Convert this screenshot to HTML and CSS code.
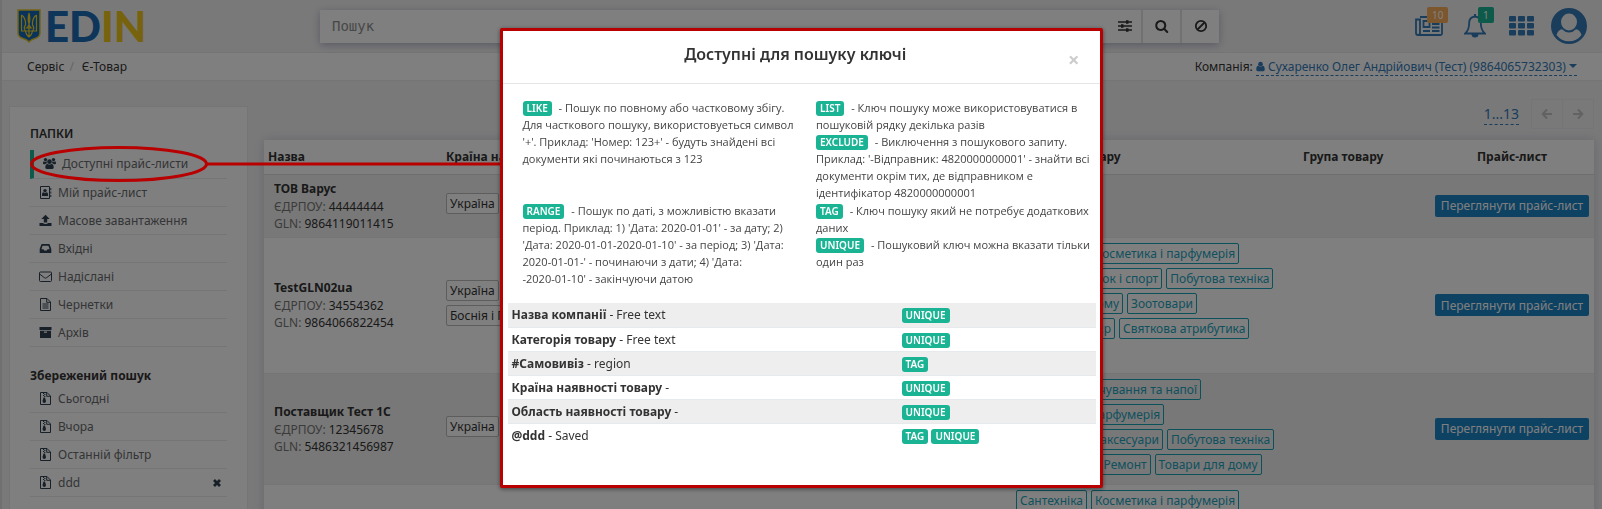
FILE: index.html
```html
<!DOCTYPE html>
<html lang="uk">
<head>
<meta charset="utf-8">
<title>EDIN Є-Товар</title>
<link rel="stylesheet" href="styles.css">
</head>
<body>
<svg class="sprite" aria-hidden="true">
  <symbol id="i-group" viewBox="0 0 14 13"><circle cx="7" cy="4.500" r="2.500"/><circle cx="2.700" cy="2.300" r="1.800"/><circle cx="11.300" cy="2.300" r="1.800"/><path d="M4.600 6.800Q7 8.600 9.400 6.800 11.600 7.600 11.600 10.600 11.600 12.500 10 12.500H4Q2.400 12.500 2.400 10.600 2.400 7.600 4.600 6.800ZM0 6.500Q0 4 1 4 2.600 5 4 4.200 4 5.500 4.300 6.200 3 6.400 2.500 7.300H1Q0 7.300 0 6.500ZM14 6.500Q14 4 13 4 11.400 5 10 4.200 10 5.500 9.700 6.200 11 6.400 11.500 7.300H13Q14 7.300 14 6.500Z"/></symbol>
  <symbol id="i-book" viewBox="0 0 13 13"><path d="M1.500.5h9v12h-9z" fill="none" stroke="currentColor"/><circle cx="6" cy="4.600" r="1.700"/><path d="M3 10V8.200Q3 6.500 4.500 6.300 6 7.300 7.500 6.300 9 6.500 9 8.200V10ZM11.300 2H12.300V4.200H11.300ZM11.300 5.400H12.300V7.600H11.300ZM11.300 8.800H12.300V11H11.300Z"/></symbol>
  <symbol id="i-upload" viewBox="0 0 13 13"><path d="M6.500.8 10.700 5H8.200V8.500H4.800V5H2.300ZM.5 9H4Q4.500 10 6.500 10T9 9H12.500V12H.5Z"/></symbol>
  <symbol id="i-inbox" viewBox="0 0 13 13"><path fill-rule="evenodd" d="M3 2H10Q10.500 2 10.700 2.500L12.300 7V11H.7V7L2.300 2.500Q2.500 2 3 2ZM3.600 3.700 2.400 7.200H4.500L5.200 8.500H7.800L8.500 7.200H10.600L9.400 3.700Z"/></symbol>
  <symbol id="i-mail" viewBox="0 0 13 13"><path d="M1.500 2H11.500Q12.500 2 12.500 3V10.500Q12.500 11.500 11.500 11.500H1.500Q.5 11.500.5 10.500V3Q.5 2 1.500 2ZM.6 4 5.400 7.700Q6.500 8.500 7.600 7.700L12.400 4" fill="none" stroke="currentColor"/></symbol>
  <symbol id="i-file" viewBox="0 0 13 13"><path d="M1.500.5H8L11.500 4V12.500H1.500ZM7.700.6V4.300H11.400M3.500 6H9.500M3.500 8H9.500M3.500 10H9.500" fill="none" stroke="currentColor"/></symbol>
  <symbol id="i-archive" viewBox="0 0 13 13"><path fill-rule="evenodd" d="M.5 1H12.500V4H.5ZM1 4.700H12V12H1ZM5 5.600V6.700H8V5.600Z"/></symbol>
  <symbol id="i-zip" viewBox="0 0 13 13"><path d="M1.500.5H8L11.500 4V12.500H1.500ZM7.700.6V4.300H11.400" fill="none" stroke="currentColor"/><path d="M4 1H5.200V2H4ZM5.200 2H6.400V3H5.200ZM4 3H5.200V4H4ZM5.200 4H6.400V5H5.200ZM4.500 5.500H6L7 9Q7 11 5.300 11T3.500 9Z"/></symbol>
  <symbol id="i-user" viewBox="0 0 10 11"><circle cx="5" cy="2.900" r="2.600"/><path d="M2.500 4.800Q5 7 7.500 4.800 9.700 5.200 9.700 8.800 9.700 10.700 8.200 10.700H1.800Q.3 10.700.3 8.800.3 5.200 2.500 4.800Z"/></symbol>
  <symbol id="i-close" viewBox="0 0 10 10"><path d="M2 2 8 8M8 2 2 8" fill="none" stroke="currentColor" stroke-width="2.800"/></symbol>
</svg>

<header class="topbar">
  <a class="brand" href="#" aria-label="EDIN">
    <svg class="crest" viewBox="0 0 24 34"><path d="M1 1H23V24Q23 28 18 29.500 14 30.500 12 33 10 30.500 6 29.500 1 28 1 24Z" fill="#1566b7" stroke="#e5c72b" stroke-width="1.500"/><path d="M12 4V27M12 4Q14.500 13 10 19M12 4Q9.500 13 14 19M4.500 6V22H19.500V6M4.500 6Q9 9 8.500 16 6 19 8.500 22M19.500 6Q15 9 15.500 16 18 19 15.500 22M8.500 22Q9 26 12 28 15 26 15.500 22M8.500 19H15.500" fill="none" stroke="#f3d321" stroke-width="1.200"/></svg>
    <span class="brand-name"><span class="brand-ed">ED</span><span class="brand-in">IN</span></span>
  </a>
  <form class="search">
    <input class="search-input" type="text" placeholder="Пошук" aria-label="Пошук">
    <button class="search-tune" type="button" aria-label="Фільтри"><svg width="14" height="12" viewBox="0 0 14 12"><path d="M0 2H14M0 6H14M0 10H14" stroke="currentColor" stroke-width="1.300"/><path d="M8 .3H10.500V3.700H8ZM3 4.300H5.500V7.700H3ZM8 8.300H10.500V11.700H8Z"/></svg></button>
    <button class="search-btn" type="button" aria-label="Знайти"><svg width="14" height="14" viewBox="64 0 1728 1792"><path d="M1216 832q0-185-131.500-316.500t-316.500-131.500-316.500 131.500-131.500 316.500 131.500 316.500 316.500 131.500 316.500-131.500 131.500-316.500zm512 832q0 52-38 90t-90 38q-54 0-90-38l-343-342q-179 124-399 124-143 0-273.500-55.500t-225-150-150-225-55.500-273.500 55.500-273.500 150-225 225-150 273.500-55.500 273.500 55.500 225 150 150 225 55.500 273.500q0 220-124 399l343 343q37 37 37 90z"/></svg></button>
    <button class="search-btn" type="button" aria-label="Очистити"><svg width="14" height="14" viewBox="0 0 14 14"><circle cx="7" cy="7" r="5.200" fill="none" stroke="currentColor" stroke-width="1.800"/><path d="M3.500 10.500 10.500 3.500" stroke="currentColor" stroke-width="1.800"/></svg></button>
  </form>
  <nav class="tools">
    <a class="tool" href="#" aria-label="Новини"><svg width="28" height="20" viewBox="0 0 28 20"><path d="M5 1H27V17.500Q27 19 25.500 19H3Q1 19 1 17V3.500H5V17Q5 19 3 19M8.500 5H14.500V11H8.500ZM17 5H24.500M17 8H24.500M17 11.500H24.500M8 15H15M17 15H24.500" fill="none" stroke="currentColor" stroke-width="1.800"/></svg><span class="count count-warn">10</span></a>
    <a class="tool tool-bell" href="#" aria-label="Сповіщення"><svg width="22" height="24" viewBox="0 0 22 24"><path d="M11 2.500Q5.500 3 5.200 8.500 5.300 16 1.200 19.500H20.800Q16.700 16 16.800 8.500 16.500 3 11 2.500Z" fill="none" stroke="currentColor" stroke-width="1.800"/><path d="M10 0H12V3H10ZM7.500 20H14.500Q14.500 23.500 11 23.500T7.500 20Z"/></svg><span class="count count-ok">1</span></a>
    <a class="tool" href="#" aria-label="Додатки"><svg width="25" height="20" viewBox="0 0 25 20"><g id="g3"><rect width="7" height="5.500" rx="1"/><rect x="9" width="7" height="5.500" rx="1"/><rect x="18" width="7" height="5.500" rx="1"/></g><use href="#g3" y="7"/><use href="#g3" y="14"/></svg></a>
    <a class="tool" href="#" aria-label="Профіль"><svg width="36" height="36" viewBox="0 0 36 36"><path fill-rule="evenodd" d="M18 0A18 18 0 1 1 18 36 18 18 0 0 1 18 0ZM18 5.500A8 8.500 0 1 0 18 22.500 8 8.500 0 1 0 18 5.500ZM5.500 27A15.500 15.500 0 0 0 30.500 27Q29 22 25 21.300 22 24.500 18 24.500T11 21.300Q7 22 5.500 27Z"/></svg></a>
  </nav>
</header>

<div class="crumbs">
  <nav class="crumb-links"><a href="#">Сервіс</a><span class="slash">/</span><a href="#">Є-Товар</a></nav>
  <div class="company">Компанія: <button class="company-pick" type="button"><svg width="9" height="11"><use href="#i-user"/></svg> Сухаренко Олег Андрійович (Тест) (9864065732303) <span class="caret"></span></button></div>
</div>

<div class="layout">
  <aside class="sidebar">
    <h2 class="side-title">ПАПКИ</h2>
    <ul class="side-list">
      <li class="current"><a href="#"><svg class="ico"><use href="#i-group"/></svg>Доступні прайс-листи</a></li>
      <li><a href="#"><svg class="ico"><use href="#i-book"/></svg>Мій прайс-лист</a></li>
      <li><a href="#"><svg class="ico"><use href="#i-upload"/></svg>Масове завантаження</a></li>
      <li><a href="#"><svg class="ico"><use href="#i-inbox"/></svg>Вхідні</a></li>
      <li><a href="#"><svg class="ico"><use href="#i-mail"/></svg>Надіслані</a></li>
      <li><a href="#"><svg class="ico"><use href="#i-file"/></svg>Чернетки</a></li>
      <li><a href="#"><svg class="ico"><use href="#i-archive"/></svg>Архів</a></li>
    </ul>
    <h2 class="side-title side-saved">Збережений пошук</h2>
    <ul class="side-list">
      <li><a href="#"><svg class="ico"><use href="#i-zip"/></svg>Сьогодні</a></li>
      <li><a href="#"><svg class="ico"><use href="#i-zip"/></svg>Вчора</a></li>
      <li><a href="#"><svg class="ico"><use href="#i-zip"/></svg>Останній фільтр</a></li>
      <li><a href="#"><svg class="ico"><use href="#i-zip"/></svg>ddd</a><button class="drop" type="button" aria-label="Видалити"><svg width="10" height="10"><use href="#i-close"/></svg></button></li>
    </ul>
  </aside>
  <main class="main">
    <div class="pager">
      <a class="range" href="#">1...13</a>
      <div class="pager-btns">
        <button type="button" aria-label="Назад"><svg width="12" height="12" viewBox="0 0 12 12"><path d="M11 6H2M6 1.500 1.700 6 6 10.500" fill="none" stroke="currentColor" stroke-width="2"/></svg></button>
        <button type="button" aria-label="Вперед"><svg width="12" height="12" viewBox="0 0 12 12"><path d="M1 6H10M6 1.500 10.300 6 6 10.500" fill="none" stroke="currentColor" stroke-width="2"/></svg></button>
      </div>
    </div>
    <table class="grid">
      <colgroup><col class="c-name"><col><col class="c-cat"><col class="c-group"><col class="c-price"></colgroup>
      <thead><tr><th>Назва</th><th>Країна наявності товару</th><th>Категорія товару</th><th>Група товару</th><th class="mid">Прайс-лист</th></tr></thead>
      <tbody>
        <tr>
          <td><div class="firm"><b>ТОВ Варус</b><div>ЄДРПОУ: <span>44444444</span></div><div>GLN: <span>9864119011415</span></div></div></td>
          <td><div class="tags"><span class="tag">Україна</span></div></td><td></td><td></td>
          <td class="mid"><button class="view" type="button">Переглянути прайс-лист</button></td>
        </tr>
        <tr>
          <td><div class="firm"><b>TestGLN02ua</b><div>ЄДРПОУ: <span>34554362</span></div><div>GLN: <span>9864066822454</span></div></div></td>
          <td><div class="tags"><span class="tag">Україна</span></div><div class="tags"><span class="tag">Боснія і Герцеговина</span></div></td>
          <td>
            <div class="tags"><span class="tag cat">Сантехніка</span><span class="tag cat">Косметика і парфумерія</span></div>
            <div class="tags"><span class="tag cat">Світ, відпочинок і спорт</span><span class="tag cat">Побутова техніка</span></div>
            <div class="tags"><span class="tag cat">Товари для дому</span><span class="tag cat">Зоотовари</span></div>
            <div class="tags"><span class="tag cat">Декор і інтер'єр</span><span class="tag cat">Святкова атрибутика</span></div>
            <div class="tags"><span class="tag cat">Ремонт</span></div>
          </td><td></td>
          <td class="mid"><button class="view" type="button">Переглянути прайс-лист</button></td>
        </tr>
        <tr>
          <td><div class="firm"><b>Поставщик Тест 1С</b><div>ЄДРПОУ: <span>12345678</span></div><div>GLN: <span>5486321456987</span></div></div></td>
          <td><div class="tags"><span class="tag">Україна</span></div></td>
          <td>
            <div class="tags"><span class="tag cat">Продукти харчування та напої</span></div>
            <div class="tags"><span class="tag cat">Косметика і парфумерія</span></div>
            <div class="tags"><span class="tag cat">Одяг, взуття і аксесуари</span><span class="tag cat">Побутова техніка</span></div>
            <div class="tags"><span class="tag cat">Інструменти</span><span class="tag cat">Ремонт</span><span class="tag cat">Товари для дому</span></div>
          </td><td></td>
          <td class="mid"><button class="view" type="button">Переглянути прайс-лист</button></td>
        </tr>
        <tr>
          <td></td><td></td>
          <td><div class="tags"><span class="tag cat">Сантехніка</span><span class="tag cat">Косметика і парфумерія</span></div></td><td></td><td></td>
        </tr>
      </tbody>
    </table>
  </main>
</div>

<div class="backdrop">
  <svg class="callout" width="476" height="40" viewBox="0 0 476 40"><ellipse cx="94" cy="20" rx="87.500" ry="16.500"/><path d="M182 20H476"/></svg>
  <section class="modal" role="dialog" aria-modal="true" aria-labelledby="keys-title">
    <header class="modal-head"><h1 id="keys-title">Доступні для пошуку ключі</h1><button class="modal-close" type="button" aria-label="Закрити">×</button></header>
    <div class="help">
      <p><span class="badge">LIKE</span> <span class="dash">-</span> Пошук по повному або частковому збігу.<br>Для часткового пошуку, використовуеться символ<br>'+'. Приклад: 'Номер: 123+' - будуть знайдені всі<br>документи які починаються з 123</p>
      <div>
        <p><span class="badge">LIST</span> <span class="dash">-</span> Ключ пошуку може використовуватися в<br>пошуковій рядку декілька разів</p>
        <p><span class="badge">EXCLUDE</span> <span class="dash">-</span> Виключення з пошукового запиту.<br>Приклад: '-Відправник: 4820000000001' - знайти всі<br>документи окрім тих, де відправником е<br>ідентифікатор 4820000000001</p>
      </div>
      <p><span class="badge">RANGE</span> <span class="dash">-</span> Пошук по даті, з можливістю вказати<br>період. Приклад: 1) 'Дата: 2020-01-01' - за дату; 2)<br>'Дата: 2020-01-01-2020-01-10' - за період; 3) 'Дата:<br>2020-01-01-' - починаючи з дати; 4) 'Дата:<br>-2020-01-10' - закінчуючи датою</p>
      <div>
        <p><span class="badge">TAG</span> <span class="dash">-</span> Ключ пошуку який не потребує додаткових<br>даних</p>
        <p><span class="badge">UNIQUE</span> <span class="dash">-</span> Пошуковий ключ можна вказати тільки<br>один раз</p>
      </div>
    </div>
    <table class="keys">
      <tr><td><b>Назва компанії</b> - Free text</td><td><span class="badge">UNIQUE</span></td></tr>
      <tr><td><b>Категорія товару</b> - Free text</td><td><span class="badge">UNIQUE</span></td></tr>
      <tr><td><b>#Самовивіз</b> - region</td><td><span class="badge">TAG</span></td></tr>
      <tr><td><b>Країна наявності товару</b> -</td><td><span class="badge">UNIQUE</span></td></tr>
      <tr><td><b>Область наявності товару</b> -</td><td><span class="badge">UNIQUE</span></td></tr>
      <tr><td><b>@ddd</b> - Saved</td><td><span class="badge">TAG</span> <span class="badge">UNIQUE</span></td></tr>
    </table>
  </section>
</div>
</body>
</html>
```

FILE: styles.css
```css
* { box-sizing: border-box; }
html { overflow: hidden; }
body {
  margin: 0;
  height: 100vh;
  overflow: hidden;
  border-left: 2px solid #e0e0e0;
  background: #f3f3f4;
  color: #333;
  font: 12px/17px "Noto Sans", "Open Sans", sans-serif;
}
h1, h2, p, ul { margin: 0; padding: 0; }
ul { list-style: none; }
a { color: inherit; text-decoration: none; }
button { font: inherit; color: inherit; background: none; border: 0; padding: 0; }
svg { fill: currentColor; }
.sprite { position: absolute; width: 0; height: 0; }

.topbar {
  display: flex;
  align-items: center;
  height: 53px;
  padding: 0 15px;
  border-bottom: 1px solid #e7eaec;
}
.brand { display: flex; align-items: center; gap: 4px; width: 303px; }
.crest { width: 24px; height: 34px; }
.brand-name { font: 900 42px/50px Lato, sans-serif; }
.brand-ed { color: #1c6ab5; }
.brand-in { color: #eec61c; }
.search {
  display: flex;
  flex: 1;
  height: 33px;
  max-width: 899px;
  background: #fff;
  box-shadow: 0 2px 8px rgba(60, 70, 110, .35);
}
.search-input {
  flex: 1;
  min-width: 0;
  padding: 0 12px;
  border: 0;
  background: none;
  font: 14px/20px "DejaVu Sans Mono", monospace;
}
.search-input::placeholder { color: #8f8f8f; opacity: 1; }
.search-tune, .search-btn { display: grid; place-items: center; }
.search-tune { width: 32px; }
.search-btn { width: 39px; border-left: 2px solid #e3e3e6; }
.tools { display: flex; align-items: center; gap: 21px; margin-left: auto; color: #337ab7; }
.tool { position: relative; display: block; }
.tool svg { display: block; }
.tool:nth-child(3) { margin-left: 2px; }
.tool:nth-child(4) { margin-left: -4px; }
.count {
  position: absolute;
  top: -9px;
  left: 12px;
  padding: 0 5px;
  border-radius: 2px;
  color: #fff;
  font-size: 10px;
  line-height: 16px;
}
.tool-bell .count { top: -7px; left: 14px; }
.count-warn { background: #f8ac59; }
.count-ok { background: #1ab394; }

.crumbs {
  display: flex;
  justify-content: space-between;
  align-items: center;
  height: 28px;
  padding: 0 25px;
  border-bottom: 1px solid #e7eaec;
  background: #fff;
}
.slash { padding: 0 8px 0 5px; color: #ccc; }
.company-pick { color: #337ab7; border-bottom: 1px dashed #337ab7; }
.company-pick svg { vertical-align: -1px; }
.caret { display: inline-block; border: 4px solid transparent; border-top-color: #337ab7; border-bottom: 0; vertical-align: 3px; }

.layout { display: flex; gap: 16px; padding: 0 8px 0 7px; }
.sidebar {
  width: 239px;
  height: 600px;
  margin-top: 25px;
  padding: 18px 20px;
  border: 1px solid #e7eaec;
  background: #fff;
}
.side-title { font-size: 12px; font-weight: 600; line-height: 17px; margin-bottom: 8px; }
.side-saved { margin: 20px 0 1px; font-weight: 700; }
.side-list { color: #676a6c; }
.side-list li {
  display: flex;
  align-items: center;
  justify-content: space-between;
  height: 28px;
  padding: 0 5px 0 9px;
  border-bottom: 1px solid #e7eaec;
}
.side-list .current { height: 29px; padding-bottom: 2px; border-left: 4px solid #1ab394; }
.side-list a { display: flex; align-items: center; gap: 6px; }
.ico { width: 13px; height: 13px; color: #2f4050; }
.drop { display: grid; color: #2f4050; }

.main { flex: 1; min-width: 0; }
.pager { display: flex; justify-content: flex-end; align-items: center; gap: 12px; height: 59px; padding-top: 7px; }
.range { color: #337ab7; font-size: 14px; line-height: 20px; border-bottom: 1px dashed #337ab7; }
.pager-btns { display: flex; }
.pager-btns button { display: grid; place-items: center; width: 32px; height: 30px; border: 1px solid #e7eaec; color: #c4c4c4; }
.pager-btns button + button { width: 31px; border-left: 0; }
.grid {
  width: 100%;
  table-layout: fixed;
  border-collapse: collapse;
  background: #fff;
  box-shadow: 0 0 10px rgba(60, 70, 110, .2);
}
.c-name { width: 178px; }
.c-cat { width: 287px; }
.c-group { width: 131px; }
.c-price { width: 164px; }
.grid th { height: 34px; padding: 0 4px; text-align: left; border-bottom: 1px solid #ddd; }
.grid td { padding: 5px 4px; border-bottom: 1px solid #e7eaec; }
.grid .mid { text-align: center; }
.grid tbody tr:nth-child(odd) { background: #f0f0f0; }
.firm { padding-left: 6px; color: #777; }
.firm b { display: block; line-height: 18px; color: #333; }
.firm span { color: #333; }
.tags { display: flex; gap: 4px; height: 25px; align-items: flex-start; white-space: nowrap; }
.tag { padding: 0 3px; line-height: 19px; background: #fff; border: 1px solid #bbb; border-radius: 2px; }
.cat { color: #23a3bd; border-color: #17a2b8; background: none; }
.view { height: 22px; padding: 0 6px; border-radius: 2px; background: #1c84c6; color: #fff; white-space: nowrap; }

.backdrop { position: fixed; inset: 0; padding-top: 28px; background: rgba(0, 0, 0, .5); }
.callout { position: absolute; left: 25px; top: 144px; fill: none; stroke: #b80000; stroke-width: 3px; }
.modal {
  position: relative;
  width: 603px;
  min-height: 460px;
  margin: 0 auto;
  border: 3px solid #b80000;
  border-radius: 2px;
  background: #fff;
  box-shadow: 0 1px 4px rgba(0, 0, 0, .5);
}
.modal-head { display: flex; align-items: center; height: 53px; padding: 0 20px; border-bottom: 1px solid #e5e5e5; }
.modal-head h1 { flex: 1; padding: 0 0 6px; text-align: center; font-size: 16px; line-height: 20px; font-weight: 600; }
.modal-close { padding-top: 5px; color: #ccc; font-size: 20px; font-weight: 700; }
.help {
  display: grid;
  grid-template-columns: 1fr 1fr;
  gap: 1px 30px;
  padding: 15px 20px 16px;
  color: #444;
  font: 11px/17px "Open Sans", "Noto Sans", sans-serif;
  white-space: nowrap;
}
.help > * { min-width: 0; }
.dash { padding-left: 4px; }
.badge { display: inline-block; padding: 0 4px; border-radius: 3px; background: #1ab394; color: #fff; font: 600 10px/15px "Noto Sans", sans-serif; }
.keys { width: calc(100% - 9px); margin: 0 4px 0 5px; border-collapse: collapse; }
.keys td { height: 24px; padding: 0 4px; border-bottom: 1px solid #e7eaec; }
.keys td:first-child { width: 390px; }
.keys tr:nth-child(odd) { background: #eee; }
.keys tr:last-child td { border: 0; }
.keys tr:nth-child(even) { background: #fff; }
```
